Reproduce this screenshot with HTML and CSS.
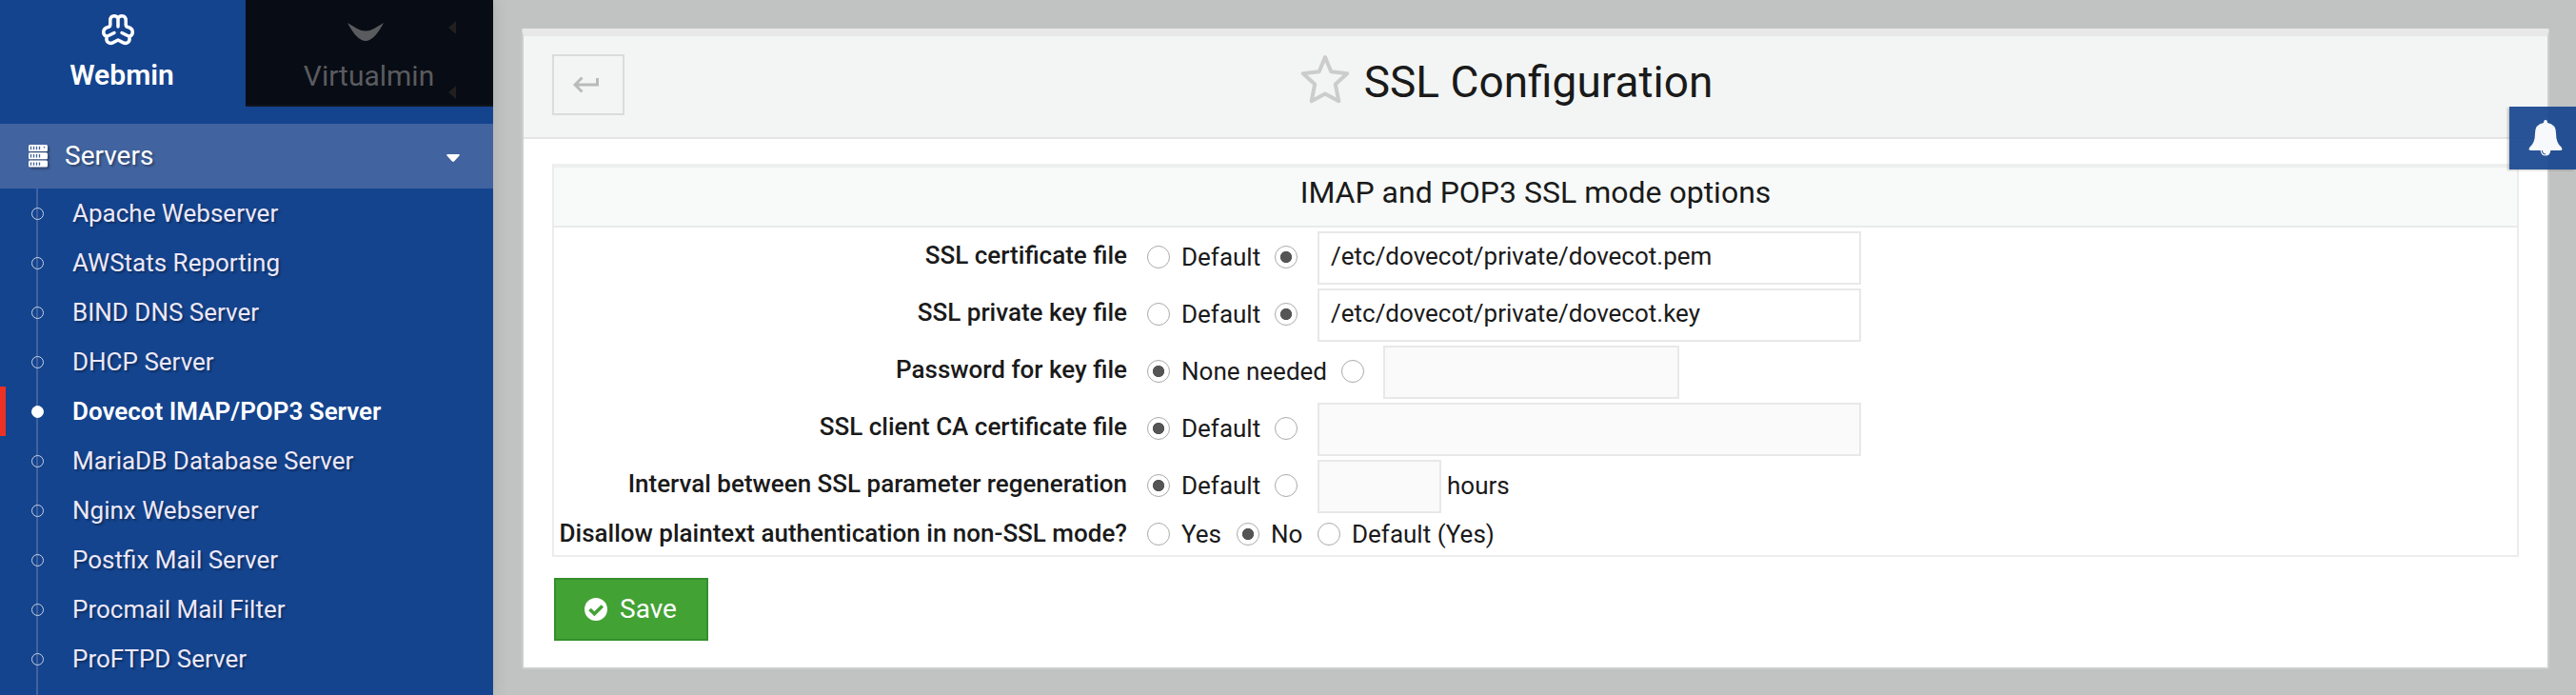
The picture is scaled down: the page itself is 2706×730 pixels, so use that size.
FILE: index.html
```
<!DOCTYPE html>
<html lang="en">
<head>
<meta charset="utf-8">
<title>SSL Configuration</title>
<link rel="stylesheet" href="styles.css">
</head>
<body>
<aside class="sidebar">
  <nav class="tabs">
    <a class="tab tab-active">
      <svg class="tab-icon" width="36" height="36" viewBox="0 0 36 36" fill="none" stroke="#fff" stroke-width="3.500" stroke-linecap="round" stroke-linejoin="round">
        <path d="M18 14V5.500Q17 2.700 14 2.700Q9.800 2.700 9.800 7.500V12Q9.800 14 7.500 14.500Q2.700 15.800 2.700 19.800Q2.700 23.500 6.300 24.300Q5 28.500 7.300 30.300Q9.600 32.300 13 30.600L18 28L23 30.600Q26.400 32.300 28.700 30.300Q31 28.500 29.700 24.300Q33.300 23.500 33.300 19.800Q33.300 15.800 28.500 14.500Q26.200 14 26.200 12V7.500Q26.200 2.700 22 2.700Q19 2.700 18 5.500M6.300 24.300L14 20.500M29.700 24.300L22 20.500"/>
      </svg>
      <span>Webmin</span>
    </a>
    <a class="tab tab-dark">
      <svg class="tab-icon" width="38" height="36" viewBox="0 0 38 36"><path fill="#5a5b5f" d="M0 9L10 15Q19 20 28 15L38 9Q28 28 19 28T0 9Z"/></svg>
      <span>Virtualmin</span>
      <i class="notch notch-top"></i>
      <i class="notch notch-bottom"></i>
    </a>
  </nav>
  <div class="group">
    <svg class="group-icon" width="20" height="24" viewBox="0 0 20 24">
      <g fill="#fff"><rect width="20" height="7" rx="1.500"/><rect y="8.300" width="20" height="7" rx="1.500"/><rect y="16.600" width="20" height="7" rx="1.500"/></g>
      <path stroke="#41639f" stroke-width="1.300" d="M2.500 1.800V5.200M5.500 1.800V5.200M8.500 1.800V5.200M11.500 1.800V5.200M2.500 10.100V13.500M5.500 10.100V13.500M8.500 10.100V13.500M11.500 10.100V13.500M2.500 18.400V21.800M5.500 18.400V21.800M8.500 18.400V21.800M11.500 18.400V21.800M16.500 2V3.500"/>
    </svg>
    <span class="group-name">Servers</span>
    <svg class="caret" width="14" height="8" viewBox="0 0 14 8"><path fill="#fff" d="M1 0H13Q14.200 .4 13.500 1.400L8.300 7.200Q7 8.400 5.700 7.200L.5 1.400Q-.2 .4 1 0Z"/></svg>
  </div>
  <ul class="menu">
    <li>Apache Webserver</li>
    <li>AWStats Reporting</li>
    <li>BIND DNS Server</li>
    <li>DHCP Server</li>
    <li class="current">Dovecot IMAP/POP3 Server</li>
    <li>MariaDB Database Server</li>
    <li>Nginx Webserver</li>
    <li>Postfix Mail Server</li>
    <li>Procmail Mail Filter</li>
    <li>ProFTPD Server</li>
    <li></li>
  </ul>
</aside>
<main class="content">
  <section class="panel">
    <header class="panel-head">
      <a class="back"><svg width="28" height="18" viewBox="0 0 28 18" fill="none" stroke="#bababa" stroke-width="3"><path d="M9.500 1.500L2 9L9.500 16.500M2 9H25.500V2"/></svg></a>
      <h1 class="title">
        <svg width="52" height="52" viewBox="0 0 52 52" fill="none" stroke="#cbcccb" stroke-width="4" stroke-linejoin="round"><path d="M26 3L32.300 18.200L49.200 20.200L36.800 31.500L40.300 49.200L26 41.400L11.700 49.200L15.200 31.500L2.800 20.200L19.700 18.200Z"/></svg>
        <span>SSL Configuration</span>
      </h1>
    </header>
    <form class="options">
      <h2 class="options-title">IMAP and POP3 SSL mode options</h2>
      <div class="row"><label class="name">SSL certificate file</label>
        <i class="radio"></i><span class="opt">Default</span><i class="radio on"></i><span class="field field-path">/etc/dovecot/private/dovecot.pem</span></div>
      <div class="row"><label class="name">SSL private key file</label>
        <i class="radio"></i><span class="opt">Default</span><i class="radio on"></i><span class="field field-path">/etc/dovecot/private/dovecot.key</span></div>
      <div class="row"><label class="name">Password for key file</label>
        <i class="radio on"></i><span class="opt opt-none">None needed</span><i class="radio"></i><span class="field field-password off"></span></div>
      <div class="row"><label class="name">SSL client CA certificate file</label>
        <i class="radio on"></i><span class="opt">Default</span><i class="radio"></i><span class="field field-path off"></span></div>
      <div class="row"><label class="name">Interval between SSL parameter regeneration</label>
        <i class="radio on"></i><span class="opt">Default</span><i class="radio"></i><span class="field field-hours off"></span><span class="unit">hours</span></div>
      <div class="row row-last"><label class="name">Disallow plaintext authentication in non-SSL mode?</label>
        <i class="radio"></i><span class="opt opt-yes">Yes</span><i class="radio on"></i><span class="opt opt-no">No</span><i class="radio"></i><span class="opt">Default (Yes)</span></div>
    </form>
    <button class="save" type="button">
      <svg width="24" height="24" viewBox="0 0 24 24"><circle cx="12" cy="12" r="12" fill="#fff"/><path d="M5.500 12L10.400 16.800L18.800 8.400" fill="none" stroke="#43a234" stroke-width="3.600"/></svg>
      <span>Save</span>
    </button>
  </section>
</main>
<a class="bell">
  <svg width="36" height="38" viewBox="0 0 36 38"><path fill="#fff" fill-opacity=".97" d="M18 0Q20 0 20 2.400V3Q29 4.500 29 14Q29 24 34.500 28.500Q37 32 33 32H23.300Q23 37.500 18 37.500T12.700 32H3Q-1 32 1.500 28.500Q7 24 7 14Q7 4.500 16 3V2.400Q16 0 18 0Z"/><path fill="none" stroke="#2c5697" stroke-width="1.100" d="M14.400 32Q14.600 35.600 18 36"/></svg>
</a>
</body>
</html>
```
FILE: styles.css
```
* { box-sizing: border-box; }
body {
  margin: 0;
  display: flex;
  width: 2706px;
  height: 730px;
  overflow: hidden;
  position: relative;
  background: #c1c3c2;
  font: 26px/32px Roboto, "Liberation Sans", sans-serif;
  color: #1a1a1a;
}
.sidebar {
  flex: none;
  width: 518px;
  height: 730px;
  overflow: hidden;
  background: #14448e;
  box-shadow: 0 0 16px rgba(0, 0, 0, .12);
}
.tabs { display: flex; height: 112px; margin-bottom: 18px; }
.tab {
  display: flex;
  flex-direction: column;
  align-items: center;
  width: 258px;
  padding: 14px 4px 0 0;
  font-size: 30px;
  line-height: 36px;
}
.tab span { margin-top: 12px; }
.tab-icon { display: block; }
.tab-active { color: #fff; font-weight: 600; padding: 14px 2px 0 0; }
.tab-active .tab-icon { margin-right: 8px; }
.tab-active span { margin-top: 11px; }
.tab-dark {
  position: relative;
  width: 260px;
  padding: 15px 8px 0 0;
  background: #080c14;
  border-bottom: 2px solid #10151e;
  color: #5a5b5f;
}
.tab-dark span { margin: 11px 0 0 7px; }
.notch {
  position: absolute;
  left: 213px;
  border: solid transparent;
  border-width: 7px 8px 7px 0;
  border-right-color: #211f20;
}
.notch-top { top: 22px; }
.notch-bottom { top: 90px; }
.group {
  display: flex;
  align-items: center;
  height: 68px;
  padding: 0 35px 0 30px;
  background: #41639f;
  color: #fff;
  font-size: 28px;
  text-shadow: 2px 2px 2px rgba(0, 0, 0, .3);
}
.group-icon { filter: drop-shadow(2px 2px 1px rgba(0, 0, 0, .3)); }
.group-name { flex: 1; margin-left: 18px; }
.caret { margin-top: 3px; }
.menu {
  margin: 0;
  padding: 0;
  list-style: none;
  background: linear-gradient(#41639f, #41639f) 38px 0 / 2px 100% no-repeat;
}
.menu li {
  display: flex;
  align-items: center;
  height: 52px;
  padding-left: 33px;
  color: #ede8f8;
  text-shadow: 2px 2px 2px rgba(0, 0, 0, .3);
}
.menu li::before {
  content: "";
  width: 12px;
  height: 12px;
  margin-right: 30px;
  border: 1.5px solid #c9d2e6;
  border-radius: 50%;
}
.menu li::before { width: 11px; height: 11px; }
.menu li:empty::before { visibility: hidden; }
.menu .current {
  padding-left: 27px;
  border-left: 6px solid #ee3124;
  color: #fff;
  font-weight: 600;
  text-shadow: none;
}
.menu .current::before { border-color: #fff; background: #fff; }
.content { flex: 1; padding: 30px 28px 27px 30px; }
.panel {
  height: 673px;
  border: 2px solid #cdcfce;
  border-top: 8px solid #e8e8e8;
  border-radius: 2px;
  background: #fff;
}
.panel-head {
  display: grid;
  grid-template-columns: 76px 1fr 76px;
  height: 108px;
  padding: 19px 30px 0;
  border-bottom: 2px solid #e4e5e4;
  background: #f3f5f4;
}
.back {
  display: flex;
  align-items: center;
  justify-content: center;
  height: 64px;
  padding-right: 4px;
  border: 2px solid #dadcdb;
}
.title {
  display: flex;
  justify-content: center;
  margin: 0;
  padding-right: 60px;
  font-size: 46px;
  line-height: 60px;
  font-weight: 400;
}
.title svg { margin-left: -1px; }
.title span { margin: -1px 0 0 15px; }
.options {
  margin: 26px 30px 0;
  height: 413px;
  border: 2px solid #ececec;
  border-top: 4px solid #eeefef;
}
.options-title {
  height: 63px;
  margin: 0 0 2px;
  border-bottom: 2px solid #e9ebea;
  background: #f8faf9;
  font-size: 32px;
  line-height: 53px;
  font-weight: 400;
  text-align: center;
}
.row { display: flex; align-items: center; height: 60px; }
.row-last { height: 41px; }
.name {
  width: 602px;
  margin-right: 21px;
  padding: 0 0 6px;
  font-weight: 500;
  text-align: right;
  white-space: nowrap;
}
.row-last .name { padding-bottom: 4px; }
.radio {
  flex: none;
  width: 24px;
  height: 24px;
  margin-top: -2px;
  border: 1.5px solid #aaa;
  border-radius: 50%;
  background: #fff;
}
.radio.on { background: radial-gradient(circle, #555 5.700px, #fff 6.500px); }
.opt { width: 98px; margin-left: 12px; padding-bottom: 2px; white-space: nowrap; }
.opt-none { width: 168px; }
.opt-yes { width: 58px; }
.opt-no { width: 49px; }
.field {
  height: 56px;
  margin-left: 21px;
  padding-left: 12px;
  border: 2px solid #e8e8e8;
  line-height: 49px;
}
.field-path { width: 571px; }
.field-password { width: 311px; margin-left: 20px; }
.field-hours { width: 130px; }
.off { background: #fafafa; }
.unit { margin-left: 6px; padding-bottom: 3px; }
.save {
  display: flex;
  align-items: center;
  width: 162px;
  height: 66px;
  margin: 22px 0 0 32px;
  padding: 0 0 0 30px;
  border: 2px solid #338f2c;
  background: #43a234;
  color: #fff;
  font: 28px/32px Roboto, "Liberation Sans", sans-serif;
}
.save span { margin: -1px 0 0 13px; }
.bell {
  position: absolute;
  top: 112px;
  right: 0;
  display: flex;
  width: 70px;
  height: 66px;
  padding: 14px 0 0 20px;
  background: rgba(20, 68, 142, .91);
  box-shadow: -2px 1px 2px rgba(0, 0, 0, .2);
}
```
